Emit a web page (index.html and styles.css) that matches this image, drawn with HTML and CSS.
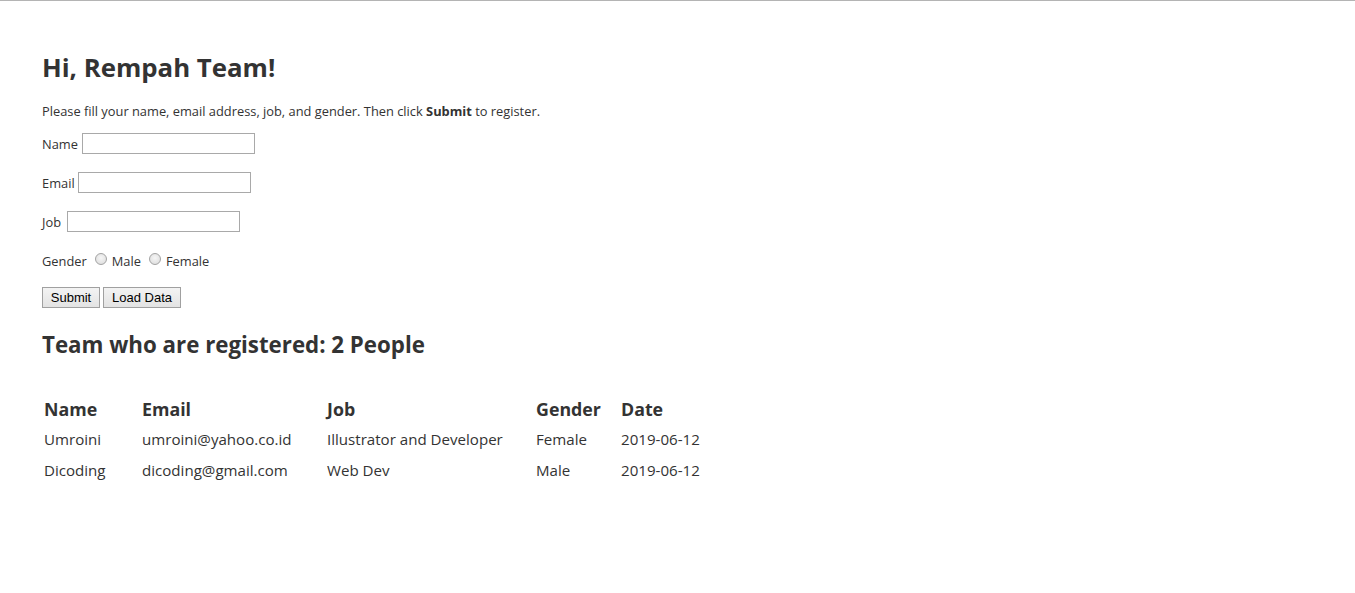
FILE: index.html
```html
<!DOCTYPE html>
<html>
<head>
<meta charset="utf-8">
<title>Rempah Team</title>
<link rel="stylesheet" href="styles.css">
</head>
<body>
<main class="page">
  <h1 class="title">Hi, Rempah Team!</h1>
  <p class="intro">Please fill your name, email address, job, and gender. Then click <b>Submit</b> to register.</p>
  <form class="form">
    <div class="row"><label for="name">Name</label> <input class="field" id="name" type="text"></div>
    <div class="row"><label for="email">Email</label> <input class="field" id="email" type="text"></div>
    <div class="row"><label for="job">Job</label> <input class="field" id="job" type="text"></div>
    <div class="row gender">
      <span>Gender</span>
      <label class="opt"><input class="radio" type="radio" name="gender"> Male</label>
      <label class="opt"><input class="radio" type="radio" name="gender"> Female</label>
    </div>
    <div class="actions">
      <button class="btn" type="button">Submit</button>
      <button class="btn" type="button">Load Data</button>
    </div>
  </form>
  <h2 class="sub">Team who are registered: 2 People</h2>
  <table class="team">
    <thead>
      <tr><th class="c1">Name</th><th class="c2">Email</th><th class="c3">Job</th><th class="c4">Gender</th><th class="c5">Date</th></tr>
    </thead>
    <tbody>
      <tr><td>Umroini</td><td>umroini@yahoo.co.id</td><td>Illustrator and Developer</td><td>Female</td><td>2019-06-12</td></tr>
      <tr><td>Dicoding</td><td>dicoding@gmail.com</td><td>Web Dev</td><td>Male</td><td>2019-06-12</td></tr>
    </tbody>
  </table>
</main>
</body>
</html>
```
FILE: styles.css
```css
html, body { margin: 0; padding: 0; }
body {
  border-top: 1px solid #b4b4b4;
  color: #333;
  font-family: "Open Sans", "Noto Sans", sans-serif;
  background: #fff;
}
.page { padding: 48px 42px 0; }
.title {
  font-size: 25.8px;
  font-weight: 700;
  line-height: 36px;
  margin: 0 0 17px;
}
.intro {
  font-size: 12.85px;
  line-height: 18px;
  margin: 0 0 13px;
}
.intro b { font-weight: 700; }
.form {
  display: flex;
  flex-direction: column;
  gap: 18px;
  font-size: 12.85px;
}
.row {
  height: 21px;
  display: flex;
  align-items: center;
  gap: 4px;
}
.field {
  box-sizing: border-box;
  width: 173px;
  height: 21px;
  margin: 0;
  border: 1px solid #a9a9a9;
  background: #fff;
  padding: 1px 2px;
}
#email { margin-left: -1px; }
#job { margin-left: 2px; }
.gender { gap: 8px; }
.opt { display: flex; align-items: center; gap: 5px; }
.radio {
  -webkit-appearance: none;
  appearance: none;
  box-sizing: border-box;
  width: 12px;
  height: 12px;
  margin: -3px 0 0;
  border-radius: 50%;
  border: 1px solid #a3a3a3;
  background: radial-gradient(circle at 50% 40%, #f6f6f6 0%, #e2e2e2 70%, #d2d2d2 100%);
}
.actions {
  display: flex;
  gap: 3px;
  margin-top: -2px;
}
.btn {
  box-sizing: border-box;
  height: 21px;
  padding: 0 6px;
  margin: 0;
  font-family: "Liberation Sans", Arial, sans-serif;
  font-size: 13px;
  color: #000;
  border: 1px solid #a0a0a0;
  border-radius: 0;
  background: linear-gradient(#f3f3f3, #e3e3e3);
}
.btn:first-child { width: 58px; }
.btn:last-child { width: 78px; }
.sub {
  font-size: 22.3px;
  font-weight: 700;
  line-height: 30px;
  margin: 22px 0 0;
}
.team {
  border-collapse: collapse;
  margin: 37px 0 0 0;
  text-align: left;
}
.team th {
  font-size: 17.8px;
  font-weight: 700;
  line-height: 24px;
  padding: 0 2px 3px;
}
.team td {
  font-size: 15.1px;
  line-height: 20px;
  padding: 5px 2px 6px;
}
.c1 { width: 94px; }
.c2 { width: 181px; }
.c3 { width: 205px; }
.c4 { width: 81px; }
.c5 { width: 120px; }
```
